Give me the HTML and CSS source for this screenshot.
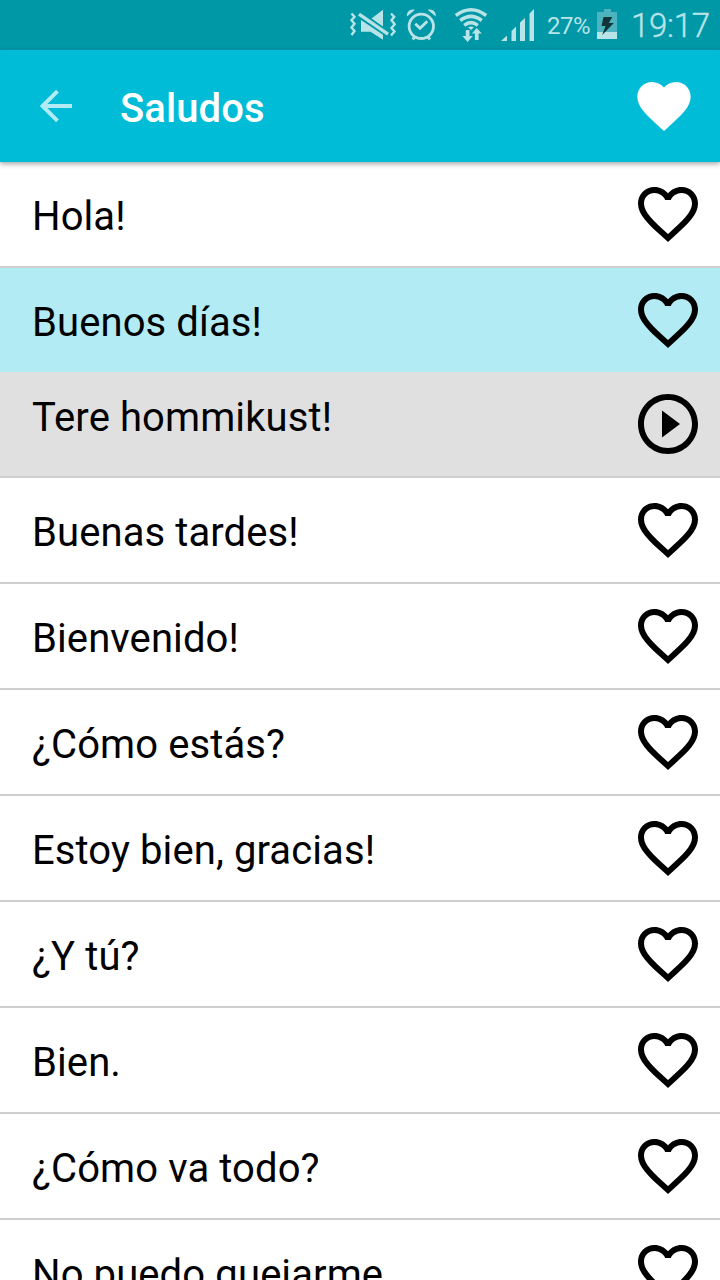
FILE: index.html
```html
<!DOCTYPE html>
<html lang="es">
<head>
<meta charset="utf-8">
<title>Saludos</title>
<link rel="stylesheet" href="styles.css">
</head>
<body>
<svg class="symbols" aria-hidden="true">
  <symbol id="heart-outline" viewBox="0 0 24 24"><path d="M16.5 3c-1.74 0-3.41.81-4.5 2.09C10.91 3.81 9.24 3 7.5 3 4.42 3 2 5.42 2 8.5c0 3.78 3.4 6.86 8.55 11.54L12 21.35l1.45-1.32C18.6 15.36 22 12.28 22 8.5 22 5.42 19.58 3 16.5 3zm-4.4 15.55l-.1.1-.1-.1C7.14 14.24 4 11.39 4 8.5 4 6.5 5.5 5 7.5 5c1.54 0 3.04.99 3.57 2.36h1.87C13.46 5.99 14.96 5 16.5 5c2 0 3.5 1.5 3.5 3.5 0 2.89-3.14 5.74-7.9 10.05z"/></symbol>
  <symbol id="play-circle" viewBox="0 0 24 24"><path d="M10 16.5l6-4.5-6-4.5v9zM12 2C6.480 2 2 6.480 2 12s4.480 10 10 10 10-4.480 10-10S17.520 2 12 2zm0 18c-4.410 0-8-3.590-8-8s3.590-8 8-8 8 3.590 8 8-3.590 8-8 8z"/></symbol>
</svg>
<div class="screen">
  <div class="status-bar">
    <svg class="status-icons" viewBox="348 0 192 50">
      <path class="line" stroke-width="2.4" d="M351.500 13.500l3 3.300-3 3.500 3 3.500-3 3.700 3 3.500-3 4M391 13.500l3.200 3.300-2.700 3.500 3.200 4-3.200 3.700 3 3.500-3.500 4"/>
      <path class="solid" d="M383 9.700v16.800l-11.500-8zM361 20l22 14.800v5L370.500 31.800H361z"/>
      <path class="line" stroke-width="3.400" d="M359 14.200l29 20"/>
      <g class="line">
        <circle cx="421.300" cy="26.300" r="12.200" stroke-width="2.800"/>
        <path stroke-width="2.900" d="M415.300 23.700l4.700 4.600 7.300-7"/>
        <path stroke-width="3" d="M414.800 36.500l-2 3M427.800 36.500l2 3"/>
      </g>
      <path class="solid" d="M407 16.500c-.8-5 3.500-8 8-6.800zM435.700 16.500c.8-5-3.500-8-8-6.800z"/>
      <g class="line" stroke-width="3.500">
        <path d="M455.800 15.500q15.200-11.500 30.400 0M460.200 20.500q10.800-8.300 21.600 0M464.200 25.300q6.800-5.300 13.600 0"/>
      </g>
      <path class="solid" d="M468 27.300q3-1.800 6 0l-3 2.800zM465.800 30h3.700v6h3.300l-5.200 6-5.200-6h3.400zM474.900 40v-6.500h-3l4.900-5.500 5 5.500h-3.200V40z"/>
      <path class="solid" d="M501 41l6-5.500V41zM511.500 41V31l4.500-4.500V41zM520 41V22.500l5-4.500v23zM529.500 41V13.500L534 9v32z"/>
    </svg>
    <span class="battery-level">27%</span>
    <svg class="battery" viewBox="0 0 20 30">
      <path class="battery-shell" d="M7 0h7v3h6v27H0V3h7z"/>
      <path class="battery-fill" d="M0 23h20v7H0z"/>
      <path class="battery-bolt" d="M6.500 8h8.800l-3.500 6h5L5.200 26l3.300-9H4.500z"/>
    </svg>
    <span class="clock">19:17</span>
  </div>
  <header class="app-bar">
    <svg class="back" viewBox="0 0 32 32"><path d="M32 16H3M17.500 1.200L2.500 16l15 14.800"/></svg>
    <h1 class="title">Saludos</h1>
    <svg class="favorites" viewBox="0 0 24 24"><path d="M12 21.350l-1.450-1.320C5.400 15.360 2 12.280 2 8.500 2 5.420 4.420 3 7.500 3c1.740 0 3.410.81 4.500 2.090C13.090 3.810 14.760 3 16.500 3 19.580 3 22 5.420 22 8.500c0 3.780-3.400 6.860-8.550 11.540L12 21.350z"/></svg>
  </header>
  <main class="list">
    <div class="row"><span class="phrase">Hola!</span><svg class="action"><use href="#heart-outline"/></svg></div>
    <div class="row selected"><span class="phrase">Buenos días!</span><svg class="action"><use href="#heart-outline"/></svg></div>
    <div class="row translation"><span class="phrase">Tere hommikust!</span><svg class="action"><use href="#play-circle"/></svg></div>
    <div class="row"><span class="phrase">Buenas tardes!</span><svg class="action"><use href="#heart-outline"/></svg></div>
    <div class="row"><span class="phrase">Bienvenido!</span><svg class="action"><use href="#heart-outline"/></svg></div>
    <div class="row"><span class="phrase">¿Cómo estás?</span><svg class="action"><use href="#heart-outline"/></svg></div>
    <div class="row"><span class="phrase">Estoy bien, gracias!</span><svg class="action"><use href="#heart-outline"/></svg></div>
    <div class="row"><span class="phrase">¿Y tú?</span><svg class="action"><use href="#heart-outline"/></svg></div>
    <div class="row"><span class="phrase">Bien.</span><svg class="action"><use href="#heart-outline"/></svg></div>
    <div class="row"><span class="phrase">¿Cómo va todo?</span><svg class="action"><use href="#heart-outline"/></svg></div>
    <div class="row"><span class="phrase">No puedo quejarme</span><svg class="action"><use href="#heart-outline"/></svg></div>
  </main>
</div>
</body>
</html>
```
FILE: styles.css
```css
* { box-sizing: border-box; }
body { margin: 0; background: #fff; font-family: Roboto, sans-serif; color: #000; }
svg { display: block; flex-shrink: 0; }
.symbols { display: none; }
.screen { width: 720px; height: 1280px; overflow: hidden; display: flex; flex-direction: column; }

.status-bar { height: 50px; flex-shrink: 0; display: flex; align-items: center; padding-left: 348px; background: #0097a7; color: #b8e3e7; }
.status-icons { width: 192px; height: 50px; }
.solid { fill: #b8e3e7; }
.line { fill: none; stroke: #b8e3e7; }
.battery-level { width: 50px; margin-left: 7px; font-size: 24px; line-height: 50px; padding-top: 1px; letter-spacing: -0.5px; }
.battery { width: 20px; height: 30px; margin-top: -2px; }
.battery-shell { fill: #4db3be; }
.battery-fill { fill: #b8e3e7; }
.battery-bolt { fill: #10343a; }
.clock { margin-left: 14px; font-size: 33px; font-weight: 300; line-height: 50px; padding-top: 2px; letter-spacing: -0.3px; -webkit-text-stroke: 0.4px #b8e3e7; }

.app-bar { position: relative; z-index: 1; height: 112px; flex-shrink: 0; display: flex; align-items: center; padding: 0 24px 0 40px; background: #00bcd7; box-shadow: 0 2px 5px rgba(0, 0, 0, .35); }
.back { width: 32px; height: 32px; fill: none; stroke: #b2ebf3; stroke-width: 4; }
.title { flex: 1; margin: 6px 0 0 48px; color: #fff; font-size: 40px; font-weight: 500; line-height: 48px; letter-spacing: 0.1px; }
.favorites { width: 64px; height: 64px; fill: #fff; }

.list { flex: 1; min-height: 0; overflow: hidden; }
.row { height: 106px; display: flex; align-items: center; justify-content: space-between; padding: 0 16px 0 32px; border-bottom: 2px solid #cfcfcf; }
.selected { height: 104px; border-bottom: 0; background: #b2ebf3; }
.translation { background: #e0e0e0; }
.phrase { font-size: 40px; line-height: 48px; padding-top: 6px; white-space: nowrap; letter-spacing: 0.1px; }
.translation .phrase { padding: 0 0 12px; }
.action { width: 72px; height: 72px; }
```
